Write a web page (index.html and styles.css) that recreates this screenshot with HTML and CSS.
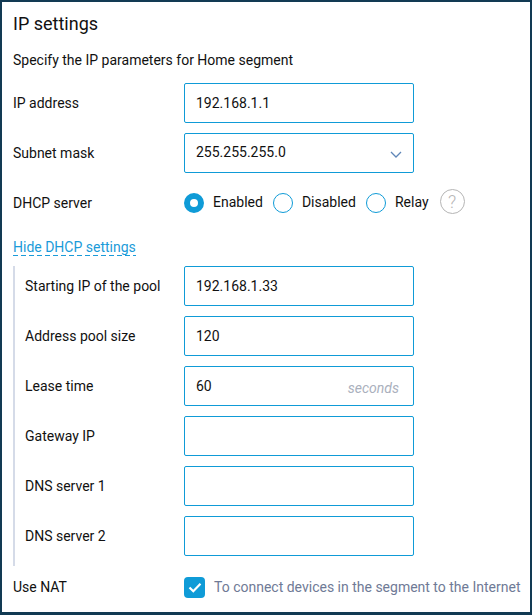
FILE: index.html
```html
<!DOCTYPE html>
<html lang="en">
<head>
<meta charset="utf-8">
<title>IP settings</title>
<link rel="stylesheet" href="styles.css">
</head>
<body>
<main class="panel">
  <h1 class="title">IP settings</h1>
  <p class="desc">Specify the IP parameters for Home segment</p>
  <div class="row">
    <span class="label">IP address</span>
    <div class="field">192.168.1.1</div>
  </div>
  <div class="row">
    <span class="label">Subnet mask</span>
    <div class="field field-select">255.255.255.0
      <svg class="chevron" width="12" height="7" viewBox="0 0 12 7"><path d="M1 1l5 5 5-5" fill="none" stroke="#5f86b8" stroke-width="1.3"/></svg>
    </div>
  </div>
  <div class="row">
    <span class="label">DHCP server</span>
    <div class="radios">
      <span class="radio radio-on"></span><span class="radio-text">Enabled</span>
      <span class="radio"></span><span class="radio-text">Disabled</span>
      <span class="radio"></span><span class="radio-text">Relay</span>
      <span class="help">?</span>
    </div>
  </div>
  <div class="link-row"><a class="toggle">Hide DHCP settings</a></div>
  <section class="sub">
    <div class="row"><span class="label label-sub">Starting IP of the pool</span><div class="field">192.168.1.33</div></div>
    <div class="row"><span class="label label-sub">Address pool size</span><div class="field">120</div></div>
    <div class="row"><span class="label label-sub">Lease time</span><div class="field field-unit">60<em class="unit">seconds</em></div></div>
    <div class="row"><span class="label label-sub">Gateway IP</span><div class="field"></div></div>
    <div class="row"><span class="label label-sub">DNS server 1</span><div class="field"></div></div>
    <div class="row"><span class="label label-sub">DNS server 2</span><div class="field"></div></div>
  </section>
  <div class="row row-nat">
    <span class="label">Use NAT</span>
    <div class="check-wrap">
      <span class="check"><svg width="14" height="11" viewBox="0 0 14 11"><path d="M1.5 5.5l3.8 3.8L12.5 1.8" fill="none" stroke="#fff" stroke-width="2.2"/></svg></span>
      <span class="check-text">To connect devices in the segment to the Internet</span>
    </div>
  </div>
</main>
</body>
</html>
```
FILE: styles.css
```css
* { box-sizing: border-box; }
html, body { margin: 0; padding: 0; background: #fff; }
body { width: 532px; height: 615px; overflow: hidden; }
.panel {
  width: 532px;
  height: 615px;
  border: solid #123a53;
  border-width: 2px 2px 3px 2px;
  padding: 0 0 0 11px;
  background: #fff;
  color: #111;
  font: 14px/20px Roboto, "Liberation Sans", sans-serif;
}
.title { margin: 0; padding-top: 10px; font-size: 18px; font-weight: 400; line-height: 24px; height: 34px; }
.desc { margin: 0; padding-top: 14px; height: 47px; }
.row { display: flex; align-items: center; height: 40px; margin-bottom: 10px; }
.label { width: 171px; flex: none; }
.label-sub { width: 159px; }
.field {
  position: relative;
  width: 230px;
  height: 40px;
  flex: none;
  border: 1px solid #0f9bd7;
  border-radius: 2px;
  padding: 9px 11px;
  background: #fff;
}
.field-select { padding-top: 8px; }
.chevron { position: absolute; right: 11px; top: 17px; }
.unit { position: absolute; right: 14px; top: 11px; color: #aab0bd; font-size: 14px; }
.radios { display: flex; align-items: center; }
.radio { width: 20px; height: 20px; border-radius: 50%; border: 1px solid #0f9bd7; flex: none; }
.radio-on { border: 6px solid #0f9bd7; }
.radio-text { margin: -2px 10px 0 9px; }
.help {
  width: 25px; height: 25px; margin: -4px 0 0 1px; border: 1px solid #b5b5b5; border-radius: 50%;
  color: #b5b5b5; text-align: center; line-height: 23px; font-size: 18px; font-weight: 300;
}
.link-row { height: 33px; padding-top: 4px; }
.toggle {
  display: inline-block;
  height: 19px;
  color: #1a9bd9;
  background: repeating-linear-gradient(90deg, #1a9bd9 0 5px, transparent 5px 8px) left bottom / 100% 1px no-repeat;
}
.sub { display: flow-root; border-left: 2px solid #d5dbe8; padding-left: 10px; }
.row-nat { margin: 0; height: 41px; padding-top: 1px; }
.check-wrap { display: flex; align-items: center; }
.check {
  width: 21px; height: 21px; border-radius: 4px; background: #0f9bd7;
  display: flex; align-items: center; justify-content: center; flex: none;
}
.check-text { margin-left: 9px; color: #6f7a96; white-space: nowrap; }
```
